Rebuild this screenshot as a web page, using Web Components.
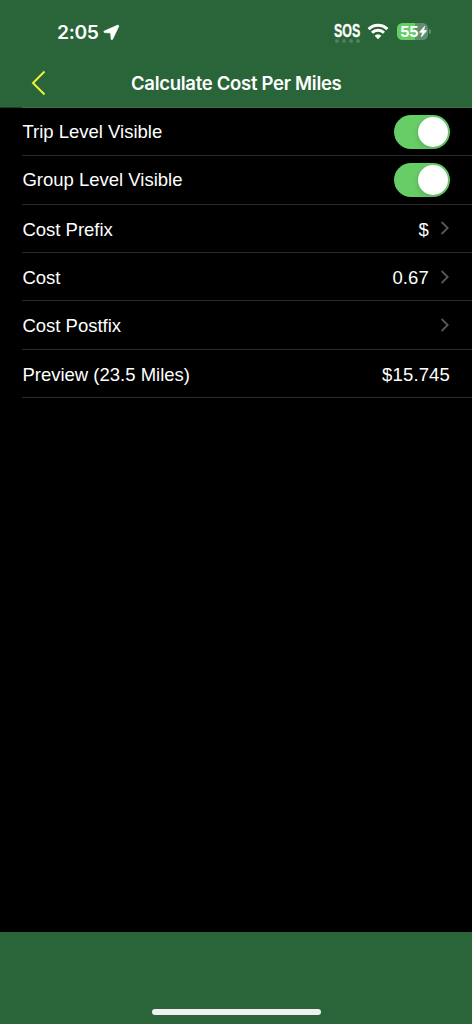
<!DOCTYPE html>
<html lang="en">
<head>
<meta charset="utf-8">
<title>Calculate Cost Per Miles</title>
<style>
html,body{margin:0;height:100%;background:#000}
</style>
</head>
<body>
<app-screen></app-screen>
<script>
const define = (name, html) => {
  const template = document.createElement('template');
  template.innerHTML = html;
  customElements.define(name, class extends HTMLElement {
    constructor() {
      super();
      this.attachShadow({mode: 'open'}).append(template.content.cloneNode(true));
    }
  });
};

define('status-bar', `
<style>
:host{display:flex;height:60px;box-sizing:border-box;padding:0 41px 0 57px;align-items:flex-start;color:#fff;font-family:Inter,sans-serif}
.time{font-size:19.3px;font-weight:600;line-height:24px;margin-top:20px;width:43px;letter-spacing:-.35px;white-space:nowrap}
.loc{width:17px;height:17px;margin:24px 0 0 3px}
.sos{margin:22px 0 0 auto;width:27px;display:flex;flex-direction:column}
.sos b{font:700 18px/18px "Liberation Sans",sans-serif;width:38px;transform:scaleX(.69);transform-origin:0 0;-webkit-text-stroke:.3px #fff}
.dots{display:flex;justify-content:space-between;padding:0 1px;margin-top:-1px}
.dots i{width:4px;height:4px;border-radius:50%;background:#4f8060}
.wifi{width:22px;height:18px;margin:23px 0 0 6px}
.battery{width:31px;height:17px;margin:23px 0 0 8px;border-radius:5.5px;background:linear-gradient(90deg,#67ce67 0 17.5px,#5e8f70 17.5px);display:flex;align-items:center;box-sizing:border-box;padding-left:3px}
.battery span{font-size:15px;font-weight:700;line-height:17px;width:18.5px;letter-spacing:-.7px}
.battery svg{width:8px;height:13px}
.cap{width:2px;height:5px;margin:29px 0 0 1px;border-radius:0 2px 2px 0;background:#5e8f70}
</style>
<div class="time">2:05</div>
<svg class="loc" viewBox="0 0 17 17"><path d="M14.5 1.2 1.3 7Q.3 8 1.4 8.6L7.7 8.9 8.1 15.2Q8.8 16.3 9.6 15.3L15.7 2.4Q15.9 .8 14.5 1.2Z" fill="#fff" stroke="#fff" stroke-width=".7"/></svg>
<div class="sos"><b>SOS</b><div class="dots"><i></i><i></i><i></i><i></i></div></div>
<svg class="wifi" viewBox="0 0 22 18"><path d="M1.6 6.1A13.4 13.4 0 0 1 20.4 6.1M5 9.8A8.5 8.5 0 0 1 17 9.8" fill="none" stroke="#fff" stroke-width="3"/><path d="M7.6 12.8A5 5 0 0 1 14.4 12.8L11 16.3Z" fill="#fff"/></svg>
<div class="battery"><span>55</span><svg viewBox="0 0 8 12"><path d="M5.7.7.5 6.8H3.6L2.3 11.4 7.6 5.1H4.6Z" fill="#fff" stroke="#fff" stroke-width=".7"/></svg></div>
<div class="cap"></div>`);

define('nav-bar', `
<style>
:host{display:grid;grid-template-columns:131px 1fr 131px;height:46px;align-items:center;color:#fff}
svg{width:16px;height:26px;margin-left:31px;display:block}
h1{margin:0;font:600 18.5px/24px Inter,sans-serif;letter-spacing:-.29px;white-space:nowrap;text-align:center}
</style>
<svg viewBox="0 0 16 26"><path d="M13.5 1.5 2 13 13.5 24.5" fill="none" stroke="#f1f23e" stroke-width="2"/></svg>
<h1><slot></slot></h1>`);

define('toggle-switch', `
<style>
:host{display:flex;justify-content:flex-end;align-items:center;box-sizing:border-box;width:56px;height:34px;border-radius:17px;background:#67ce67;padding:2px}
i{width:30px;height:30px;border-radius:50%;background:#fff;box-shadow:-1px 2px 5px #0002}
</style><i></i>`);

define('chevron-icon', `
<style>:host{display:block;width:10px;height:16px;margin-left:11px}svg{display:block}</style>
<svg width="10" height="16" viewBox="0 0 10 16"><path d="M1.6 2 7.7 8 1.6 14" fill="none" stroke="#59595c" stroke-width="1.8"/></svg>`);

define('setting-row', `
<style>
:host{display:flex;box-sizing:border-box;height:48.35px;margin-left:22.4px;padding-right:22px;align-items:center;border-bottom:1px solid #2c2c2e;color:#fff;font:18.5px/24px "Liberation Sans",sans-serif;white-space:nowrap}
.label{flex:1;padding-top:var(--drop,0)}
.end{display:flex;align-items:center}
::slotted(.value){letter-spacing:.15px;padding-top:var(--drop,0)}
</style>
<span class="label"><slot name="label"></slot></span><div class="end"><slot></slot></div>`);

define('home-bar', `
<style>
:host{display:flex;height:92px;box-sizing:border-box;background:#2a6439;justify-content:center;align-items:flex-end;padding-bottom:9px}
i{width:169px;height:6px;border-radius:3px;background:#f0f0f0}
</style><i></i>`);

define('app-screen', `
<style>
:host{display:flex;flex-direction:column;height:1024px;width:472px;background:#000;overflow:hidden}
header{background:#2a6439;height:107px;flex:none}
main{flex:1}
.top{height:1px;background:linear-gradient(90deg,#1c4025 22px,#426b4c 22px)}
.text{--drop:2px}
.low{--drop:3px}
home-bar{flex:none}
</style>
<header><status-bar></status-bar><nav-bar>Calculate Cost Per Miles</nav-bar></header>
<main>
<div class="top"></div>
<setting-row><span slot="label">Trip Level Visible</span><toggle-switch></toggle-switch></setting-row>
<setting-row><span slot="label">Group Level Visible</span><toggle-switch></toggle-switch></setting-row>
<setting-row class="low"><span slot="label">Cost Prefix</span><span class="value">$</span><chevron-icon></chevron-icon></setting-row>
<setting-row class="text"><span slot="label">Cost</span><span class="value">0.67</span><chevron-icon></chevron-icon></setting-row>
<setting-row class="text"><span slot="label">Cost Postfix</span><chevron-icon></chevron-icon></setting-row>
<setting-row class="low"><span slot="label">Preview (23.5 Miles)</span><span class="value">$15.745</span></setting-row>
</main>
<home-bar></home-bar>`);
</script>
</body>
</html>
